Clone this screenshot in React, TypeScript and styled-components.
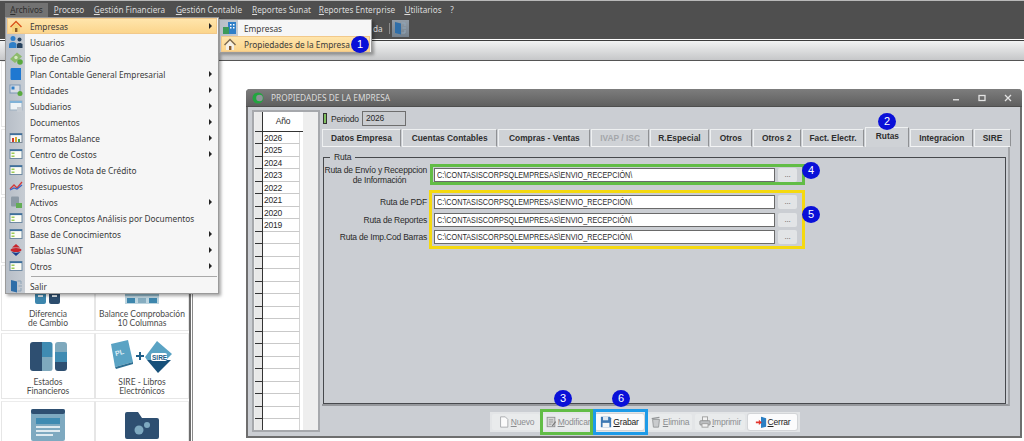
import styled, { createGlobalStyle } from "styled-components"
import { ReactNode } from "react"

const Global = createGlobalStyle`
    html, body {
        margin: 0;
        padding: 0;
        background: #fff;
    }
    * { box-sizing: border-box; }
`

const Page = styled.div`
    position: relative;
    width: 1024px;
    height: 441px;
    overflow: hidden;
    background: #fff;
    font-family: "Liberation Sans", Arial, sans-serif;
`

/* ---------- top bars ---------- */

const TopBar = styled.div`
    height: 39px;
    background: #4f4f4f;
    border-top: 1px solid #b9b9b9;
`

const MenuBar = styled.div`
    display: flex;
    align-items: center;
    height: 17px;
    padding: 2px 0 0 5px;
    font-family: "Noto Sans", sans-serif;
    font-size: 8.2px;
`

const MenuTitle = styled.span<{ $open?: boolean; $w: number }>`
    flex: none;
    width: ${p => p.$w}px;
    height: 15px;
    line-height: 14px;
    text-align: center;
    white-space: nowrap;
    color: ${p => (p.$open ? "#2e2e2e" : "#dcdcdc")};
    background: ${p => (p.$open ? "#727272" : "transparent")};
    u { text-underline-offset: 1px; }
`

const ToolStrip = styled.div`
    display: flex;
    align-items: center;
    height: 19px;
    padding: 1px 0 0 373px;
    font-family: "Noto Sans", sans-serif;
    font-size: 8.2px;
    color: #dcdcdc;
`

const ToolSep = styled.span`
    width: 1px;
    height: 11px;
    margin: 0 2px 0 6px;
    background: #8a8a8a;
`

const ToolBtn = styled.span`
    display: flex;
    align-items: center;
    justify-content: center;
    width: 17px;
    height: 17px;
    background: linear-gradient(#929ca6, #74808c);
`

const SubBar = styled.div`
    height: 21px;
    margin-top: 1px;
    border-top: 1px solid #3c3c3c;
    border-bottom: 1px solid #555;
    background: linear-gradient(#f2f3f3, #c6c7c9);
`

/* ---------- side panel ---------- */

const Main = styled.div`
    display: flex;
    height: 380px;
`

const Side = styled.div`
    width: 193px;
    height: 100%;
    padding-left: 1px;
    border-right: 1px solid #8b8b8b;
    display: flex;
`

const SideGrid = styled.div`
    display: grid;
    grid-template-columns: 94px 94px;
    grid-auto-rows: 65.5px;
    row-gap: 2.5px;
    width: 190px;
    border-right: 2px solid #6d6d6d;
    padding-right: 1px;
`

const Tile = styled.div`
    display: flex;
    flex-direction: column;
    align-items: center;
    padding: 5px 0 2px;
    border: 1px solid #e6e6e6;
    border-top: 1px solid #ececec;
    font-family: Lato, sans-serif;
    font-size: 8.5px;
    line-height: 9px;
    color: #4a4a4a;
    text-align: center;
    white-space: nowrap;
    overflow: hidden;
`

const TileIcon = styled.div`
    display: flex;
    align-items: center;
    justify-content: center;
    flex: none;
    height: 36px;
    margin-bottom: auto;
`

/* ---------- menus ---------- */

const Menu = styled.div`
    position: absolute;
    left: 5px;
    top: 17px;
    width: 214px;
    height: 277px;
    padding: 0 1px;
    background: linear-gradient(90deg, #b7bec7 0, #c6ccd3 19px, #f6f6f6 19px);
    border: 1px solid #9a9a9a;
    box-shadow: 2px 2px 3px rgba(0, 0, 0, .35);
    font-family: "Noto Sans", sans-serif;
    font-size: 8.3px;
    color: #3a3a3a;
`

const SubMenu = styled(Menu)`
    left: 219px;
    top: 19px;
    width: 153px;
    height: 34px;
    background: linear-gradient(90deg, #b7bec7 0, #c6ccd3 18px, #f6f6f6 18px);
    span { margin-left: 6px; }
`

const Item = styled.div<{ $active?: boolean }>`
    display: flex;
    align-items: center;
    height: 16px;
    padding-left: 2px;
    white-space: nowrap;
    background: ${p => (p.$active ? "linear-gradient(#ffe6ae, #fbd48a)" : "transparent")};
    box-shadow: ${p => (p.$active ? "inset 0 0 0 1px #f2c98a" : "none")};
    svg { flex: none; }
    span { margin-left: 7px; flex: 1; }
    i {
        width: 0;
        height: 0;
        margin-right: 5px;
        border-left: 3px solid #222;
        border-top: 3px solid transparent;
        border-bottom: 3px solid transparent;
    }
`

const MenuSep = styled.div`
    height: 1px;
    margin: 2px 0 1px 24px;
    background: #a9a9a9;
`

/* ---------- window ---------- */

const Win = styled.div`
    position: absolute;
    left: 246px;
    top: 89px;
    width: 776px;
    height: 349px;
    background: #cbced3;
    border: 2px solid #6e6e6e;
    border-top: none;
    border-radius: 4px 4px 0 0;
    font-size: 8.5px;
    letter-spacing: -.2px;
    color: #2a2a2a;
`

const TitleBar = styled.div`
    display: flex;
    align-items: center;
    height: 18px;
    margin: 0 -2px;
    padding: 0 1px 0 6px;
    background: linear-gradient(#7d7d7d, #5f5f5f);
    border-bottom: 1px solid #4e4e4e;
    border-radius: 4px 4px 0 0;
    color: #dcdcdc;
    font-family: "Noto Sans", sans-serif;
    font-size: 8.3px;
    letter-spacing: 0;
`

const TitleText = styled.span`
    flex: 1;
    margin-left: 7px;
`

const WinCtl = styled.span`
    display: flex;
    justify-content: center;
    width: 26px;
`

const WinBody = styled.div`
    display: flex;
    padding: 3px 0 0 4px;
`

const YearFrame = styled.div`
    width: 68px;
    height: 322px;
    padding: 0 0 0 1px;
    background: #eeeeee;
    border: 2px solid #a6a8ac;
    overflow: hidden;
`

const YearHead = styled.div`
    display: flex;
    height: 19.5px;
    border-bottom: 1px solid #333;
    margin-right: 15px;
    background: #fff;
    div:first-child { width: 8px; background: #eaeaea; border-right: 1px solid #333; }
    div:last-child { flex: 1; text-align: center; line-height: 19px; }
`

const YearRow = styled.div`
    display: flex;
    height: 12.5px;
    margin-right: 15px;
    background: #fff;
    line-height: 12px;
    div:first-child { width: 8px; background: #e8e8e8; border-right: 1px solid #333; border-bottom: 1px solid #333; }
    div:last-child {
        flex: 1;
        padding-left: 1px;
        border-bottom: 1px solid #c9c9c9;
        border-right: 1px solid #d4d4d4;
        margin-right: 3px;
    }
`

const RightCol = styled.div`
    width: 690px;
    margin-left: 2px;
`

const PeriodRow = styled.div`
    display: flex;
    align-items: center;
    height: 17px;
    padding-left: 2px;
`

const Led = styled.span`
    width: 2px;
    height: 9px;
    margin-right: 5px;
    background: #7fbf60;
    outline: 1px solid #333;
`

const PeriodBox = styled.span`
    width: 44px;
    height: 15px;
    margin-left: 3px;
    padding-left: 3px;
    line-height: 13px;
    border: 1px solid #6e6e6e;
    background: #c9ccd0;
`

const Tabs = styled.div`
    display: flex;
    align-items: flex-end;
    height: 20px;
`

const Tab = styled.div<{ $w: number; $active?: boolean; $off?: boolean }>`
    width: ${p => p.$w}px;
    height: ${p => (p.$active ? 20 : 18)}px;
    padding-bottom: ${p => (p.$active ? 3 : 0)}px;
    margin-right: 1px;
    display: flex;
    align-items: center;
    justify-content: center;
    font-weight: bold;
    font-size: 8.4px;
    letter-spacing: 0;
    white-space: nowrap;
    background: #cfd2d6;
    color: ${p => (p.$off ? "#a4a6aa" : "#2e2e2e")};
    border-top: 1px solid #eef0f1;
    border-left: 1px solid #eef0f1;
    border-right: 1px solid #8f9194;
    border-bottom: ${p => (p.$active ? "none" : "1px solid #f3f4f5")};
`

const TabPane = styled.div`
    height: 259px;
    width: 688px;
    padding: 10px 2px 0 1px;
    border-bottom: 2px solid #96989c;
    border-right: 2px solid #a3a5a9;
`

const Group = styled.div`
    position: relative;
    height: 247px;
    padding-top: 10px;
    border: 1px solid #47494d;
`

const Legend = styled.span`
    position: absolute;
    left: 6px;
    top: -5px;
    padding: 0 4px;
    background: #cbced3;
    line-height: 9px;
`

const FieldRow = styled.div<{ $gap: number }>`
    display: flex;
    align-items: center;
    height: 14px;
    margin-bottom: ${p => p.$gap}px;
`

const FieldLabel = styled.div`
    width: 103px;
    line-height: 10px;
    text-align: right;
    white-space: nowrap;
`

const LabelCenter = styled.div`
    text-align: center;
    margin-left: 8px;
`

const PathInput = styled.div`
    width: 341px;
    height: 14px;
    margin-left: 7px;
    padding-left: 2px;
    line-height: 12px;
    background: #fff;
    border: 1px solid #6a6a6a;
    white-space: nowrap;
    overflow: hidden;
`

const PathText = styled.span`
    display: inline-block;
    font-size: 9px;
    letter-spacing: 0;
    transform: scaleX(.806);
    transform-origin: left center;
`

const Dots = styled.div`
    width: 19px;
    height: 14px;
    margin-left: 3px;
    text-align: center;
    line-height: 13px;
    font-size: 8px;
    color: #555;
    background: #e2e4e6;
    border-radius: 2px;
`

const Mark = styled.div<{ $x: number; $y: number; $w: number; $h: number; $c: string }>`
    position: absolute;
    left: ${p => p.$x}px;
    top: ${p => p.$y}px;
    width: ${p => p.$w}px;
    height: ${p => p.$h}px;
    border: 3px solid ${p => p.$c};
    pointer-events: none;
`

const Badge = styled.div<{ $x: number; $y: number }>`
    position: absolute;
    left: ${p => p.$x - 9}px;
    top: ${p => p.$y - 8.5}px;
    width: 18px;
    height: 17px;
    border-radius: 50%;
    background: #0a10d8;
    color: #fff;
    font-family: "Liberation Sans", sans-serif;
    font-size: 11px;
    line-height: 17px;
    text-align: center;
`

const ActionBar = styled.div`
    display: flex;
    align-items: center;
    gap: 3px;
    width: 310px;
    height: 20px;
    margin: 6px 0 0 168px;
    padding: 0 2px;
    background: #e3e5e7;
`

const ActionBtn = styled.div<{ $w: number; $on?: boolean }>`
    display: flex;
    align-items: center;
    justify-content: center;
    gap: 1px;
    width: ${p => p.$w}px;
    height: 16px;
    flex: none;
    white-space: nowrap;
    overflow: hidden;
    color: ${p => (p.$on ? "#222" : "#8b8d90")};
    background: ${p => (p.$on ? "#fbfbfc" : "#e9ebec")};
    border-radius: 2px;
    box-shadow: ${p => (p.$on ? "0 0 0 1px #d3d5d8" : "none")};
    svg { flex: none; width: 12px; height: 12px; }
`

/* ---------- small drawings ---------- */

const Svg = ({ children }: { children?: ReactNode }) => (
    <svg width={14} height={14} viewBox="0 0 14 14">{children}</svg>
)

const House = ({ pale }: { pale?: boolean }) => (
    <Svg>
        <path d="M1 7.5 7 1.500l6 6-1 1-5-5-5 5z" fill={pale ? "#7a6a55" : "#d9541c"} />
        <path d="M3 8 7 4l4 4v5H3z" fill={pale ? "#f3f0e8" : "#f4d27a"} />
        <rect x="6" y="9" width="2.400" height="4" fill="#8a5a2a" />
    </Svg>
)
const Users = () => (
    <Svg>
        <circle cx="4" cy="3.500" r="2.500" fill="#2f7fc8" />
        <path d="M0 13V9.500C0 8 2 7 4 7s3.500 1 3.500 2.500V13z" fill="#2f7fc8" />
        <circle cx="10.500" cy="4.500" r="2" fill="#27435f" />
        <path d="M8 13V9.500C8 8.500 9 8 10.500 8S13.500 8.500 13.500 9.500V13z" fill="#27435f" />
    </Svg>
)
const Money = () => (
    <Svg>
        <path d="M1 8 8 1.500l5 4L6 12z" fill="#8dbb6c" />
        <circle cx="7" cy="6.500" r="1.700" fill="#d6e8c2" />
        <circle cx="11" cy="11" r="2.800" fill="#59a93e" />
    </Svg>
)
const Book = () => (
    <Svg>
        <path d="M3 1h9v12H3c-1 0-1.500-.5-1.500-1.500v-9C1.500 1.500 2 1 3 1z" fill="#1f78d1" />
    </Svg>
)
const Cards = () => (
    <Svg>
        <rect x="1" y="2" width="10" height="8" fill="#d8dde4" stroke="#7d97b5" />
        <rect x="2.500" y="3.500" width="3" height="3" fill="#2f7fc8" />
        <circle cx="11" cy="10.500" r="2.500" fill="#59a93e" />
    </Svg>
)
const Sheet = () => (
    <Svg>
        <rect x="1" y="2" width="12" height="9" fill="#eef3f6" stroke="#9bb0c2" />
        <rect x="1" y="2" width="12" height="2" fill="#7fb2d8" />
        <rect x="8" y="8" width="5" height="5" fill="#c6ccd3" />
    </Svg>
)
const Ledger = () => (
    <Svg>
        <rect x="1" y="2.500" width="12" height="9" fill="#fdfdf6" stroke="#6f8aa3" />
        <rect x="1" y="2.500" width="12" height="1.600" fill="#3d6f9d" />
        <rect x="2.500" y="5.500" width="3" height="1.500" fill="#9ccb55" />
        <rect x="2.500" y="8.500" width="3" height="1.500" fill="#9ccb55" />
    </Svg>
)
const Bars = () => (
    <Svg>
        <rect x="1" y="2.500" width="12" height="9" fill="#f4f6f8" stroke="#7c8a98" />
        <rect x="1" y="2.500" width="12" height="1.600" fill="#3d6f9d" />
        <rect x="3" y="7" width="2" height="4" fill="#cf3a2a" />
        <rect x="6" y="6" width="2" height="5" fill="#e0a92c" />
        <rect x="9" y="8" width="2" height="3" fill="#4aa04a" />
    </Svg>
)
const Trend = () => (
    <Svg>
        <path d="M1 10 5 6l3 3 5-6" fill="none" stroke="#d23a3a" strokeWidth="1.300" />
        <path d="M1 11 5 9l3 1 5-4" fill="none" stroke="#3a62c4" strokeWidth="1.300" />
    </Svg>
)
const Drum = () => (
    <Svg>
        <rect x="2" y="1.500" width="8" height="10" rx="1" fill="#8d9aa6" />
        <rect x="7" y="8" width="6" height="5" fill="#63ad55" />
    </Svg>
)
const Sunat = () => (
    <Svg>
        <path d="M7 1l4 3.500H3z" fill="#c8252c" />
        <ellipse cx="7" cy="7" rx="5.500" ry="2" fill="#c8252c" />
        <path d="M2 8.500c2 1.500 8 1.500 10 0L7 13z" fill="#1b3f8f" />
    </Svg>
)
const Door = () => (
    <Svg>
        <path d="M2 1l6 1.500v11L2 12z" fill="#2f6ea8" />
        <path d="M8.500 2H12v3M12 9v3H8.500" fill="none" stroke="#8fa5b8" />
        <path d="M9.500 7h3.500" stroke="#8fa5b8" />
    </Svg>
)
const Towers = () => (
    <Svg>
        <rect x="5" y="1" width="8" height="12" fill="#2f7fc8" />
        <rect x="0" y="6" width="6" height="7" fill="#3c9a5a" />
        <rect x="7" y="3" width="1.500" height="1.500" fill="#fff" />
        <rect x="10" y="3" width="1.500" height="1.500" fill="#fff" />
        <rect x="7" y="6" width="1.500" height="1.500" fill="#fff" />
        <rect x="10" y="6" width="1.500" height="1.500" fill="#fff" />
    </Svg>
)

const DocIco = () => (
    <Svg>
        <path d="M3 1h5.500L11.500 4v9H3z" fill="#fbfbfb" stroke="#a3a5a8" />
    </Svg>
)
const NoteIco = () => (
    <Svg>
        <rect x="2.500" y="1.500" width="9" height="11" fill="#d8d8d8" stroke="#8f8f8f" />
        <path d="M4.500 4.500h5M4.500 7h5M4.500 9.500h3" stroke="#8f8f8f" />
        <path d="M8 11l4-5 1 1-4 5z" fill="#777" />
    </Svg>
)
const DiskIco = () => (
    <Svg>
        <path d="M1 1h10.500L13 2.500V13H1z" fill="#3d78b4" />
        <rect x="3.500" y="1" width="6" height="4" fill="#dfe8f1" />
        <rect x="3" y="8" width="8" height="5" fill="#f4f6f8" />
    </Svg>
)
const TrashIco = () => (
    <Svg>
        <path d="M3 4h8l-1 9H4z" fill="#c9cbcd" stroke="#929496" />
        <path d="M2 3l9-1.500" stroke="#929496" strokeWidth="1.500" />
    </Svg>
)
const PrintIco = () => (
    <Svg>
        <rect x="4" y="1" width="6" height="5" fill="#f2f2f2" stroke="#9a9a9a" />
        <rect x="1" y="5.500" width="12" height="5" rx="1" fill="#bdbfc1" stroke="#8d8d8d" />
        <rect x="3.500" y="9" width="7" height="4" fill="#f2f2f2" stroke="#9a9a9a" />
    </Svg>
)
const CloseIco = () => (
    <Svg>
        <path d="M7 1l6 1.500v10L7 14z" fill="#2b7fc4" />
        <path d="M1 6.500h3.500V4.500L8 7.500l-3.500 3V8.500H1z" fill="#e2352d" />
    </Svg>
)

const DiffIcon = () => (
    <svg width="28" height="30" viewBox="0 0 28 30">
        <rect x="1" y="0" width="11" height="30" rx="2" fill="#3d86ad" />
        <rect x="15" y="0" width="11" height="30" rx="2" fill="#2c4d6e" />
        <rect x="4" y="21" width="5" height="2" fill="#dfeaf0" />
        <rect x="18" y="21" width="5" height="2" fill="#dfeaf0" />
    </svg>
)
const BalanceIcon = () => (
    <svg width="34" height="30" viewBox="0 0 34 30">
        <rect x="0" y="0" width="34" height="22" fill="#8fb7c9" />
        <rect x="0" y="22" width="34" height="8" fill="#bcd4df" />
        <rect x="2" y="24" width="8" height="5" fill="#3d86ad" />
        <rect x="13" y="24" width="8" height="5" fill="#86adc0" />
        <rect x="24" y="24" width="8" height="5" fill="#3d86ad" />
    </svg>
)
const EstadosIcon = () => (
    <svg width="37" height="30" viewBox="0 0 37 30">
        <path d="M3 0h9v29H3a3 3 0 0 1-3-3V3a3 3 0 0 1 3-3z" fill="#2e4f71" />
        <path d="M12 0h8a2.500 2.500 0 0 1 2.500 2.500V15H12z" fill="#3f8bb2" />
        <path d="M12 15h10.500v11.500A2.500 2.500 0 0 1 20 29h-8z" fill="#7fa9bd" />
        <path d="M28 0h6a3 3 0 0 1 3 3v7H25V3a3 3 0 0 1 3-3z" fill="#7fa9bd" />
        <rect x="25" y="10" width="12" height="10" fill="#3f8bb2" />
        <path d="M25 20h12v6a3 3 0 0 1-3 3h-6a3 3 0 0 1-3-3z" fill="#2e4f71" />
    </svg>
)
const SireIcon = () => (
    <svg width="62" height="34" viewBox="0 0 62 34">
        <path d="M0 4 17 0l5 22-18 5z" fill="#5aa3c4" />
        <path d="M4 27l18-5v2L5 29z" fill="#2e6f92" />
        <text x="4" y="15" fontFamily="Liberation Sans" fontWeight="bold" fontSize="7" fill="#dfeef5" transform="rotate(-14 8 12)">PL</text>
        <path d="M25 15h3v-3h2v3h3v2h-3v3h-2v-3h-3z" fill="#1f5f88" />
        <path d="M46 1l15 13-6 6H36l-2-3z" fill="#5aa3c4" />
        <path d="M36 20h24L47 33z" fill="#17507a" />
        <rect x="40" y="13" width="16" height="8" rx="2" fill="#fff" />
        <text x="41" y="20" fontFamily="Liberation Sans" fontWeight="bold" fontSize="6.500" fill="#1f5f88">SIRE</text>
    </svg>
)
const PageIcon = () => (
    <svg width="34" height="32" viewBox="0 0 34 32">
        <rect width="34" height="32" rx="2" fill="#7ea9c0" />
        <rect width="34" height="5" rx="2" fill="#2e4f71" />
        <rect x="5" y="9" width="24" height="6" fill="#3f8bb2" />
        <rect x="5" y="17" width="24" height="2" fill="#dfeaf0" />
        <rect x="5" y="21" width="24" height="2" fill="#dfeaf0" />
        <rect x="5" y="25" width="17" height="2" fill="#dfeaf0" />
    </svg>
)
const FolderIcon = () => (
    <svg width="34" height="27" viewBox="0 0 34 27">
        <path d="M2 0h11l4 6h15a2 2 0 0 1 2 2v17a2 2 0 0 1-2 2H2a2 2 0 0 1-2-2V2a2 2 0 0 1 2-2z" fill="#2e4f71" />
        <circle cx="14" cy="18" r="4.500" fill="#7ea9c0" />
        <circle cx="22" cy="13" r="3" fill="#7ea9c0" />
    </svg>
)

/* ---------- data ---------- */

const menuItems: { icon: ReactNode; label: string; more?: boolean; active?: boolean }[] = [
    { icon: <House />, label: "Empresas", more: true, active: true },
    { icon: <Users />, label: "Usuarios" },
    { icon: <Money />, label: "Tipo de Cambio" },
    { icon: <Book />, label: "Plan Contable General Empresarial", more: true },
    { icon: <Cards />, label: "Entidades", more: true },
    { icon: <Sheet />, label: "Subdiarios", more: true },
    { icon: <Svg />, label: "Documentos", more: true },
    { icon: <Bars />, label: "Formatos Balance", more: true },
    { icon: <Ledger />, label: "Centro de Costos", more: true },
    { icon: <Ledger />, label: "Motivos de Nota de Crédito" },
    { icon: <Trend />, label: "Presupuestos" },
    { icon: <Drum />, label: "Activos", more: true },
    { icon: <Ledger />, label: "Otros Conceptos Análisis por Documentos" },
    { icon: <Ledger />, label: "Base de Conocimientos", more: true },
    { icon: <Sunat />, label: "Tablas SUNAT", more: true },
    { icon: <Ledger />, label: "Otros", more: true },
]

const topMenus: [string, string, number][] = [
    ["P", "roceso", 42],
    ["G", "estión Financiera", 79],
    ["G", "estión Contable", 80],
    ["R", "eportes Sunat", 65],
    ["R", "eportes Enterprise", 86],
    ["U", "tilitarios", 46],
]

const tabs: { label: string; w: number; active?: boolean; off?: boolean }[] = [
    { label: "Datos Empresa", w: 79 },
    { label: "Cuentas Contables", w: 96 },
    { label: "Compras - Ventas", w: 92 },
    { label: "IVAP / ISC", w: 58, off: true },
    { label: "R.Especial", w: 59 },
    { label: "Otros", w: 42 },
    { label: "Otros 2", w: 48 },
    { label: "Fact. Electr.", w: 63 },
    { label: "Rutas", w: 44, active: true },
    { label: "Integracion", w: 63 },
    { label: "SIRE", w: 37 },
]

const years = ["2026", "2025", "2024", "2023", "2022", "2021", "2020", "2019", ...Array(16).fill("")]
const PATH = "C:\\CONTASISCORPSQLEMPRESAS\\ENVIO_RECEPCIÓN\\"

export default function App() {
    return (
        <Page>
            <Global />
            <TopBar>
                <MenuBar>
                    <MenuTitle $open $w={43}><u>A</u>rchivos</MenuTitle>
                    {topMenus.map(([k, rest, w], i) => (
                        <MenuTitle key={i} $w={w}><u>{k}</u>{rest}</MenuTitle>
                    ))}
                    <MenuTitle $w={12}>?</MenuTitle>
                </MenuBar>
                <ToolStrip>
                    da
                    <ToolSep />
                    <ToolBtn><Door /></ToolBtn>
                </ToolStrip>
            </TopBar>
            <SubBar />

            <Main>
                <Side>
                    <SideGrid>
                        <Tile /><Tile />
                        <Tile /><Tile />
                        <Tile /><Tile />
                        <Tile><TileIcon><DiffIcon /></TileIcon>Diferencia<br />de Cambio</Tile>
                        <Tile><TileIcon><BalanceIcon /></TileIcon>Balance Comprobación<br />10 Columnas</Tile>
                        <Tile><TileIcon><EstadosIcon /></TileIcon>Estados<br />Financieros</Tile>
                        <Tile><TileIcon><SireIcon /></TileIcon>SIRE - Libros<br />Electrónicos</Tile>
                        <Tile><TileIcon><PageIcon /></TileIcon></Tile>
                        <Tile><TileIcon><FolderIcon /></TileIcon></Tile>
                    </SideGrid>
                </Side>
            </Main>

            <Win>
                <TitleBar>
                    <svg width="12" height="12" viewBox="0 0 12 12">
                        <circle cx="6" cy="6" r="5.500" fill="#22a53f" />
                        <circle cx="7.500" cy="6" r="3.300" fill="#8f9599" />
                    </svg>
                    <TitleText>PROPIEDADES DE LA EMPRESA</TitleText>
                    <WinCtl>
                        <svg width="8" height="8" viewBox="0 0 8 8"><rect x="1" y="5" width="6" height="1.500" fill="#d8d8d8" /></svg>
                    </WinCtl>
                    <WinCtl>
                        <svg width="8" height="8" viewBox="0 0 8 8"><rect x="1" y="1.500" width="6" height="5" fill="none" stroke="#e4e4e4" strokeWidth="1.300" /></svg>
                    </WinCtl>
                    <WinCtl>
                        <svg width="8" height="8" viewBox="0 0 8 8"><path d="M1 1l6 6M7 1l-6 6" stroke="#e4e4e4" strokeWidth="1.300" /></svg>
                    </WinCtl>
                </TitleBar>
                <WinBody>
                    <YearFrame>
                        <YearHead><div /><div>Año</div></YearHead>
                        {years.map((y, i) => (
                            <YearRow key={i}><div /><div>{y}</div></YearRow>
                        ))}
                    </YearFrame>
                    <RightCol>
                        <PeriodRow>
                            <Led />
                            Periodo
                            <PeriodBox>2026</PeriodBox>
                        </PeriodRow>
                        <Tabs>
                            {tabs.map(t => (
                                <Tab key={t.label} $w={t.w} $active={t.active} $off={t.off}>{t.label}</Tab>
                            ))}
                        </Tabs>
                        <TabPane>
                            <Group>
                                <Legend>Ruta</Legend>
                                <FieldRow $gap={13}>
                                    <FieldLabel>
                                        Ruta de Envío y Receppcion
                                        <LabelCenter>de Información</LabelCenter>
                                    </FieldLabel>
                                    <PathInput><PathText>{PATH}</PathText></PathInput>
                                    <Dots>...</Dots>
                                </FieldRow>
                                <FieldRow $gap={3.5}>
                                    <FieldLabel>Ruta de PDF</FieldLabel>
                                    <PathInput><PathText>{PATH}</PathText></PathInput>
                                    <Dots>...</Dots>
                                </FieldRow>
                                <FieldRow $gap={3.5}>
                                    <FieldLabel>Ruta de Reportes</FieldLabel>
                                    <PathInput><PathText>{PATH}</PathText></PathInput>
                                    <Dots>...</Dots>
                                </FieldRow>
                                <FieldRow $gap={0}>
                                    <FieldLabel>Ruta de Imp.Cod Barras</FieldLabel>
                                    <PathInput><PathText>{PATH}</PathText></PathInput>
                                    <Dots>...</Dots>
                                </FieldRow>
                            </Group>
                        </TabPane>
                        <ActionBar>
                            <ActionBtn $w={48}><DocIco /><span><u>N</u>uevo</span></ActionBtn>
                            <ActionBtn $w={49}><NoteIco /><span><u>M</u>odificar</span></ActionBtn>
                            <ActionBtn $w={49} $on><DiskIco /><span><u>G</u>rabar</span></ActionBtn>
                            <ActionBtn $w={45}><TrashIco /><span><u>E</u>limina</span></ActionBtn>
                            <ActionBtn $w={50}><PrintIco /><span><u>I</u>mprimir</span></ActionBtn>
                            <ActionBtn $w={49} $on><CloseIco /><span><u>C</u>errar</span></ActionBtn>
                        </ActionBar>
                    </RightCol>
                </WinBody>
            </Win>

            <Mark $x={430} $y={164} $w={375} $h={21} $c="#62bd46" />
            <Mark $x={429} $y={190} $w={376} $h={59} $c="#f5d90f" />
            <Mark $x={540} $y={409} $w={53} $h={26} $c="#62bd46" />
            <Mark $x={593} $y={409} $w={55} $h={26} $c="#1e9be8" />

            <Menu>
                {menuItems.map(m => (
                    <Item key={m.label} $active={m.active}>
                        {m.icon}
                        <span>{m.label}</span>
                        {m.more && <i />}
                    </Item>
                ))}
                <MenuSep />
                <Item>
                    <Door />
                    <span>Salir</span>
                </Item>
            </Menu>
            <SubMenu>
                <Item><Towers /><span>Empresas</span></Item>
                <Item $active><House pale /><span>Propiedades de la Empresa</span></Item>
            </SubMenu>

            <Badge $x={360} $y={44}>1</Badge>
            <Badge $x={887} $y={121}>2</Badge>
            <Badge $x={563} $y={398}>3</Badge>
            <Badge $x={811} $y={170}>4</Badge>
            <Badge $x={811} $y={214}>5</Badge>
            <Badge $x={621} $y={398}>6</Badge>
        </Page>
    )
}
